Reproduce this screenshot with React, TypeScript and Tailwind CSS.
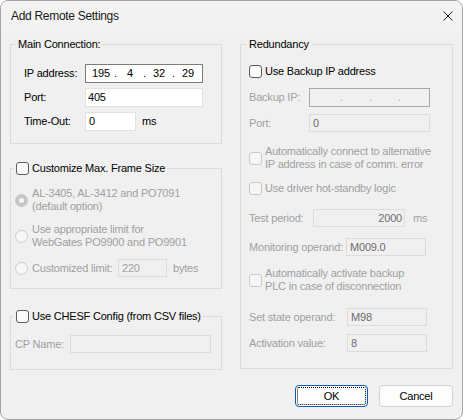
import React from 'react';

// small win32-ish building blocks
function CheckBox({ disabled }: { disabled?: boolean }) {
  return (
    <span
      className={`block w-[13px] h-[13px] shrink-0 rounded-[3px] border ${
        disabled ? 'border-[#c8c8c8] bg-[#f6f6f6]' : 'border-[#5c5c5c] bg-[#fbfbfb]'
      }`}
    />
  );
}

function Radio({ checked }: { checked?: boolean }) {
  if (checked) {
    return (
      <span className="flex w-[13px] h-[13px] shrink-0 items-center justify-center rounded-full bg-[#c6c6c6]">
        <span className="block w-[5px] h-[5px] rounded-full bg-[#f4f4f4]" />
      </span>
    );
  }
  return <span className="block w-[13px] h-[13px] shrink-0 rounded-full border border-[#cdcdcd] bg-[#f7f7f7]" />;
}

function GroupBox({
  legend,
  legendClass,
  className,
  children,
}: {
  legend: React.ReactNode;
  legendClass: string;
  className?: string;
  children: React.ReactNode;
}) {
  return (
    <fieldset className={`border border-[#dcdcdc] ${className ?? ''}`}>
      <legend className={`leading-[13px] ${legendClass}`}>{legend}</legend>
      {children}
    </fieldset>
  );
}

function IpBox({ parts, className, textClass }: { parts: string[]; className: string; textClass: string }) {
  return (
    <div className={`flex h-[19px] items-center ${className}`}>
      {parts.map((p, i) => (
        <React.Fragment key={i}>
          <span className={`w-[24px] text-center ${textClass}`}>{p}</span>
          {i < 3 && <span className={`w-[5px] text-center ${textClass}`}>.</span>}
        </React.Fragment>
      ))}
    </div>
  );
}

export default function App() {
  const grayLabel = 'text-[#a0a0a0]';
  const roBox = 'h-[18px] border border-[#dcdcdc] bg-[#f0f0f0] flex items-center text-[#6d6d6d]';

  return (
    <div className="flex w-[463px] h-[420px] flex-col overflow-hidden rounded-[8px] border border-[#a4a4a4] bg-[#f0f0f0] font-['Liberation_Sans',Arial,sans-serif] text-[11px] leading-[13px] tracking-[-0.2px] text-black">
      {/* TITLE BAR */}
      <div className="flex h-[30px] shrink-0 items-center justify-between bg-[#f3f3f3] pl-[10px] pr-[9px]">
        <span className="text-[12px] tracking-[-0.3px] text-[#1a1a1a]">Add Remote Settings</span>
        <svg width="10" height="10" viewBox="0 0 10 10" className="block">
          <path d="M0.5 0.5 L9.5 9.5 M9.5 0.5 L0.5 9.5" stroke="#1a1a1a" strokeWidth="1" fill="none" />
        </svg>
      </div>

      {/* BODY */}
      <div className="flex gap-[18px] pl-[9px] pt-[7px]">
        {/* LEFT COLUMN */}
        <div className="flex w-[212px] flex-col">
          <GroupBox legend="Main Connection:" legendClass="ml-[4px] px-[3px]" className="pb-[12px]">
            <div className="flex flex-col gap-[5px] pl-[13px] pt-[13px]">
              <div className="flex h-[19px] items-center">
                <span className="w-[61px]">IP address:</span>
                <IpBox
                  parts={['195', '4', '32', '29']}
                  className="w-[118px] border border-[#7d7d7d] bg-white pl-[3px]"
                  textClass="text-black"
                />
              </div>
              <div className="flex h-[19px] items-center">
                <span className="w-[61px]">Port:</span>
                <div className="flex h-[19px] w-[118px] items-center border border-[#e2e2e2] bg-white pl-[2px]">405</div>
              </div>
              <div className="flex h-[19px] items-center">
                <span className="w-[61px]">Time-Out:</span>
                <div className="flex h-[19px] w-[51px] items-center border border-[#e2e2e2] bg-white pl-[3px]">0</div>
                <span className="ml-[6px]">ms</span>
              </div>
            </div>
          </GroupBox>

          <GroupBox
            legend={
              <span className="flex items-center gap-[3px]">
                <CheckBox />
                <span>Customize Max. Frame Size</span>
              </span>
            }
            legendClass="ml-[3px] px-[2px]"
            className="mt-[18px] pb-[11px]"
          >
            <div className={`flex flex-col gap-[10px] pl-[4px] pt-[12px] ${grayLabel}`}>
              <div className="flex items-center gap-[4px]">
                <Radio checked />
                <span>
                  AL-3405, AL-3412 and PO7091
                  <br />
                  (default option)
                </span>
              </div>
              <div className="flex items-center gap-[4px]">
                <Radio />
                <span>
                  Use appropriate limit for
                  <br />
                  WebGates PO9900 and PO9901
                </span>
              </div>
              <div className="flex h-[18px] items-center gap-[4px]">
                <Radio />
                <span className="w-[82px]">Customized limit:</span>
                <div className={`${roBox} w-[49px] pl-[3px] !text-[#a0a0a0]`}>220</div>
                <span className="ml-[2px]">bytes</span>
              </div>
            </div>
          </GroupBox>

          <GroupBox
            legend={
              <span className="flex items-center gap-[3px]">
                <CheckBox />
                <span>Use CHESF Config (from CSV files)</span>
              </span>
            }
            legendClass="ml-[3px] px-[2px]"
            className="mt-[21px] pb-[16px]"
          >
            <div className={`flex h-[18px] items-center pl-[4px] pt-0 mt-[12px] ${grayLabel}`}>
              <span className="w-[55px]">CP Name:</span>
              <div className={`${roBox} w-[141px]`} />
            </div>
          </GroupBox>
        </div>

        {/* RIGHT COLUMN */}
        <div className="flex w-[213px] flex-col">
          <GroupBox legend="Redundancy" legendClass="ml-[5px] px-[3px]" className="pb-[16px]">
            <div className="flex flex-col pl-[8px]">
              <div className="mt-[14px] flex items-center gap-[3px]">
                <CheckBox />
                <span>Use Backup IP address</span>
              </div>

              <div className={`mt-[10px] flex h-[19px] items-center ${grayLabel}`}>
                <span className="w-[60px]">Backup IP:</span>
                <IpBox
                  parts={['', '', '', '']}
                  className="w-[121px] border border-[#a8a8a8] bg-[#f0f0f0] pl-[5px]"
                  textClass="text-[#a0a0a0]"
                />
              </div>

              <div className={`mt-[7px] flex h-[18px] items-center ${grayLabel}`}>
                <span className="w-[60px]">Port:</span>
                <div className={`${roBox} w-[121px] pl-[3px]`}>0</div>
              </div>

              <div className={`mt-[13px] flex items-center gap-[3px] ${grayLabel}`}>
                <CheckBox disabled />
                <span>
                  Automatically connect to alternative
                  <br />
                  IP address in case of comm. error
                </span>
              </div>

              <div className={`mt-[11px] flex items-center gap-[3px] ${grayLabel}`}>
                <CheckBox disabled />
                <span>Use driver hot-standby logic</span>
              </div>

              <div className={`mt-[14px] flex h-[18px] items-center ${grayLabel}`}>
                <span className="w-[64px]">Test period:</span>
                <div className={`${roBox} w-[92px] justify-end pr-[2px]`}>2000</div>
                <span className="ml-[8px]">ms</span>
              </div>

              <div className={`mt-[11px] flex h-[18px] items-center ${grayLabel}`}>
                <span className="w-[97px]">Monitoring operand:</span>
                <div className={`${roBox} w-[80px] pl-[3px]`}>M009.0</div>
              </div>

              <div className={`mt-[11px] flex items-center gap-[3px] ${grayLabel}`}>
                <CheckBox disabled />
                <span>
                  Automatically activate backup
                  <br />
                  PLC in case of disconnection
                </span>
              </div>

              <div className={`mt-[15px] flex h-[18px] items-center ${grayLabel}`}>
                <span className="w-[98px]">Set state operand:</span>
                <div className={`${roBox} w-[80px] pl-[3px]`}>M98</div>
              </div>

              <div className={`mt-[8px] flex h-[18px] items-center ${grayLabel}`}>
                <span className="w-[98px]">Activation value:</span>
                <div className={`${roBox} w-[80px] pl-[3px]`}>8</div>
              </div>
            </div>
          </GroupBox>
        </div>
      </div>

      {/* BUTTONS */}
      <div className="mt-auto flex justify-end gap-[11px] pb-[12px] pr-[9px]">
        <button className="h-[22px] w-[73px] rounded-[4px] border border-[#005fb8] bg-[#fdfdfd] outline-1 outline-dotted outline-black -outline-offset-3">
          OK
        </button>
        <button className="h-[22px] w-[74px] rounded-[4px] border border-[#d0d0d0] bg-[#fdfdfd]">Cancel</button>
      </div>
    </div>
  );
}
